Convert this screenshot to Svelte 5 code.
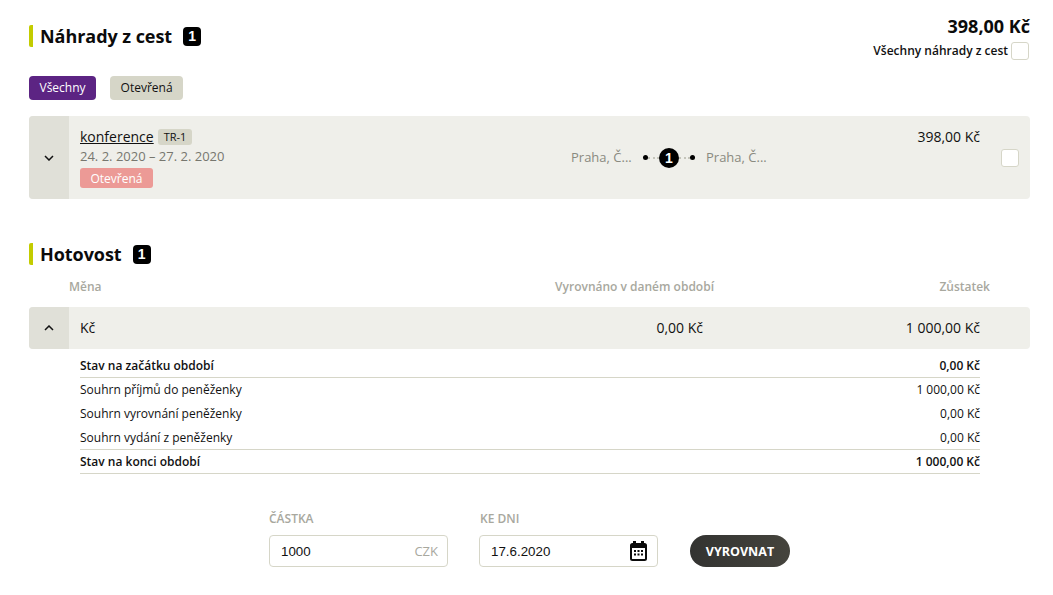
<script>
  const rows = [
    { label: 'Stav na začátku období', value: '0,00 Kč', strong: true, line: true },
    { label: 'Souhrn příjmů do peněženky', value: '1 000,00 Kč' },
    { label: 'Souhrn vyrovnání peněženky', value: '0,00 Kč' },
    { label: 'Souhrn vydání z peněženky', value: '0,00 Kč', line: true },
    { label: 'Stav na konci období', value: '1 000,00 Kč', strong: true, line: true }
  ];
</script>

<div class="page">
  <header class="top">
    <div class="heading">
      <h2>Náhrady z cest</h2>
      <span class="count">1</span>
    </div>
    <div class="total">
      <div class="sum">398,00 Kč</div>
      <label class="all">Všechny náhrady z cest <span class="check"></span></label>
    </div>
  </header>

  <div class="filters">
    <span class="pill active">Všechny</span>
    <span class="pill">Otevřená</span>
  </div>

  <div class="card">
    <div class="toggle">
      <svg width="10" height="6" viewBox="0 0 10 6"><path d="M1 1l4 4 4-4" fill="none" stroke="#111" stroke-width="1.5"/></svg>
    </div>
    <div class="info">
      <div class="line1"><a href="#a">konference</a><span class="code">TR-1</span></div>
      <div class="dates">24. 2. 2020 – 27. 2. 2020</div>
      <span class="status">Otevřená</span>
    </div>
    <div class="route">
      <span class="place">Praha, Č...</span>
      <span class="track">
        <i class="dot"></i><i class="dash"></i><b class="stop">1</b><i class="dash"></i><i class="dot"></i>
      </span>
      <span class="place">Praha, Č...</span>
    </div>
    <div class="amount">398,00 Kč</div>
    <div class="pick"><span class="check"></span></div>
  </div>

  <div class="heading second">
    <h2>Hotovost</h2>
    <span class="count">1</span>
  </div>

  <div class="cols">
    <span class="c1">Měna</span>
    <span class="c2">Vyrovnáno v daném období</span>
    <span class="c3">Zůstatek</span>
  </div>

  <div class="cash">
    <div class="toggle">
      <svg width="10" height="6" viewBox="0 0 10 6"><path d="M1 5l4-4 4 4" fill="none" stroke="#111" stroke-width="1.5"/></svg>
    </div>
    <span class="c1">Kč</span>
    <span class="c2">0,00 Kč</span>
    <span class="c3">1 000,00 Kč</span>
  </div>

  <div class="detail">
    {#each rows as r}
      <div class="row" class:strong={r.strong} class:line={r.line}>
        <span>{r.label}</span><span>{r.value}</span>
      </div>
    {/each}
  </div>

  <form class="form">
    <div class="field">
      <span class="flabel">ČÁSTKA</span>
      <div class="input"><span class="val">1000</span><span class="unit">CZK</span></div>
    </div>
    <div class="field">
      <span class="flabel second-label">KE DNI</span>
      <div class="input"><span class="val">17.6.2020</span>
        <svg class="cal" width="17" height="20" viewBox="0 0 17 20">
          <path d="M3 0h3v4H3zM11 0h3v4h-3z" fill="#0b0b0b"/>
          <rect x="1" y="3" width="15" height="16" rx="1.5" fill="none" stroke="#0b0b0b" stroke-width="2"/>
          <rect x="1" y="3" width="15" height="4" fill="#0b0b0b"/>
          <path d="M4 9h2v2H4zM7.5 9h2v2h-2zM11 9h2v2h-2zM4 12.5h2v2H4zM7.5 12.5h2v2h-2zM11 12.5h2v2h-2z" fill="#0b0b0b"/>
        </svg>
      </div>
    </div>
    <button type="button" class="btn">VYROVNAT</button>
  </form>
</div>

<style>
  :global(body) { margin: 0; background: #fff; }
  .page {
    width: 1001px;
    margin-left: 29px;
    font-family: "Open Sans", sans-serif;
    color: #111;
    font-size: 14px;
  }
  .top { display: flex; justify-content: space-between; align-items: flex-start; height: 76px; }
  .heading { display: flex; align-items: center; height: 22px; margin-top: 25px; border-left: 4px solid #c3cc00; border-radius: 2px 0 0 2px; padding-left: 7px; }
  h2 { margin: 0; font-size: 18px; line-height: 22px; font-weight: 700; color: #0b0b0b; letter-spacing: -0.05px; }
  .count { margin-left: 11px; width: 18px; height: 19px; border-radius: 4px; background: #000; color: #fff; font-family: "Liberation Sans", sans-serif; font-size: 14px; font-weight: 700; line-height: 19px; text-align: center; }
  .total { text-align: right; padding-top: 14px; }
  .sum { font-size: 18px; line-height: 24px; font-weight: 700; color: #0b0b0b; }
  .all { display: flex; align-items: center; justify-content: flex-end; gap: 3px; margin-top: 4px; margin-right: 1px; font-size: 12px; font-weight: 600; line-height: 18px; }
  .check { display: block; box-sizing: border-box; width: 18px; height: 18px; border: 1px solid #d6d6c8; border-radius: 3px; background: #fff; }
  .filters { display: flex; gap: 14px; height: 24px; margin-bottom: 16px; }
  .pill { height: 24px; line-height: 24px; padding: 0 10.5px; border-radius: 4px; background: #d6d6c8; font-size: 12px; font-weight: 400; }
  .pill.active { background: #5c2483; color: #fff; }
  .card { display: flex; height: 83px; background: #efefea; border-radius: 4px; overflow: hidden; }
  .toggle { flex: none; width: 40px; background: #e0e0d8; display: flex; align-items: center; justify-content: center; }
  .info { box-sizing: border-box; padding: 10px 0 0 11px; width: 491px; }
  .line1 { display: flex; align-items: center; height: 20px; font-size: 14px; }
  .line1 a { color: #111; text-decoration: underline; }
  .code { margin: 2px 0 0 4px; height: 16px; line-height: 16px; padding: 0 6px; border-radius: 3px; background: #d6d6c8; font-size: 11px; }
  .dates { font-size: 13px; line-height: 19px; color: #77776f; margin-top: 1px; }
  .status { display: inline-block; margin-top: 2px; height: 20px; line-height: 21px; padding: 0 10.5px; border-radius: 3px; background: #ec9a96; color: #fff; font-size: 12px; }
  .route { display: flex; align-items: center; flex: none; width: 207px; padding-left: 11px; box-sizing: border-box; font-size: 13px; color: #8a8a80; height: 83px; white-space: nowrap; }
  .place { width: 60px; flex: none; padding-bottom: 2px; }
  .track { display: flex; align-items: center; flex: none; width: 52px; margin-left: 12px; margin-right: 11px; }
  .dot { flex: none; width: 5px; height: 5px; border-radius: 50%; background: #000; }
  .dash { flex: none; width: 11px; border-top: 2px dotted #c4c4ba; }
  .stop { flex: none; width: 20px; height: 20px; border-radius: 50%; background: #000; color: #fff; font-family: "Liberation Sans", sans-serif; font-size: 14px; line-height: 20px; text-align: center; font-weight: 700; }
  .amount { flex: 1; text-align: right; padding-top: 11px; font-size: 14px; line-height: 19px; white-space: nowrap; }
  .pick { flex: none; width: 50px; display: flex; align-items: center; justify-content: center; padding-left: 9px; box-sizing: border-box; padding-top: 1px; }
  .second { margin-top: 44px; }
  .cols { display: flex; height: 20px; margin-top: 12px; padding: 0 40px; font-size: 12px; font-weight: 600; line-height: 20px; color: #a8a89e; }
  .c1 { width: 40px; flex: none; }
  .c2 { width: 605px; flex: none; text-align: right; }
  .c3 { flex: 1; text-align: right; }
  .cash { display: flex; align-items: center; height: 42px; margin-top: 10px; background: #efefea; border-radius: 4px; overflow: hidden; font-size: 14px; line-height: 18px; }
  .cash .toggle { height: 42px; }
  .cash .c1 { margin-left: 11px; }
  .cash .c2 { width: 583px; }
  .cash .c3 { padding-right: 50px; }
  .detail { margin: 5px 50px 0 51px; }
  .row { display: flex; justify-content: space-between; box-sizing: border-box; height: 24px; line-height: 23px; font-size: 12px; }
  .row.strong { font-weight: 600; }
  .row.line { border-bottom: 1px solid #d6d6c8; }
  .form { display: flex; align-items: flex-end; margin: 36px 0 0 240px; }
  .field { display: flex; flex-direction: column; width: 179px; margin-right: 31px; }
  .field + .field { margin-right: 32px; }
  .flabel { font-size: 12px; font-weight: 600; line-height: 18px; color: #a8a89e; margin-bottom: 7px; }
  .second-label { padding-left: 1px; }
  .input { display: flex; align-items: center; justify-content: space-between; box-sizing: border-box; height: 32px; padding: 0 9px 0 11px; border: 1px solid #d6d6c8; border-radius: 4px; }
  .cal { margin-right: 1px; }
  .val { font-family: "Liberation Sans", sans-serif; font-size: 13.33px; color: #111; }
  .unit { color: #a8a89e; font-size: 13px; }
  .btn { width: 100px; height: 32px; border: 0; border-radius: 16px; background: linear-gradient(90deg, #333331, #45443d); color: #fff; font: 700 12.5px "Open Sans", sans-serif; padding: 0; }
</style>
